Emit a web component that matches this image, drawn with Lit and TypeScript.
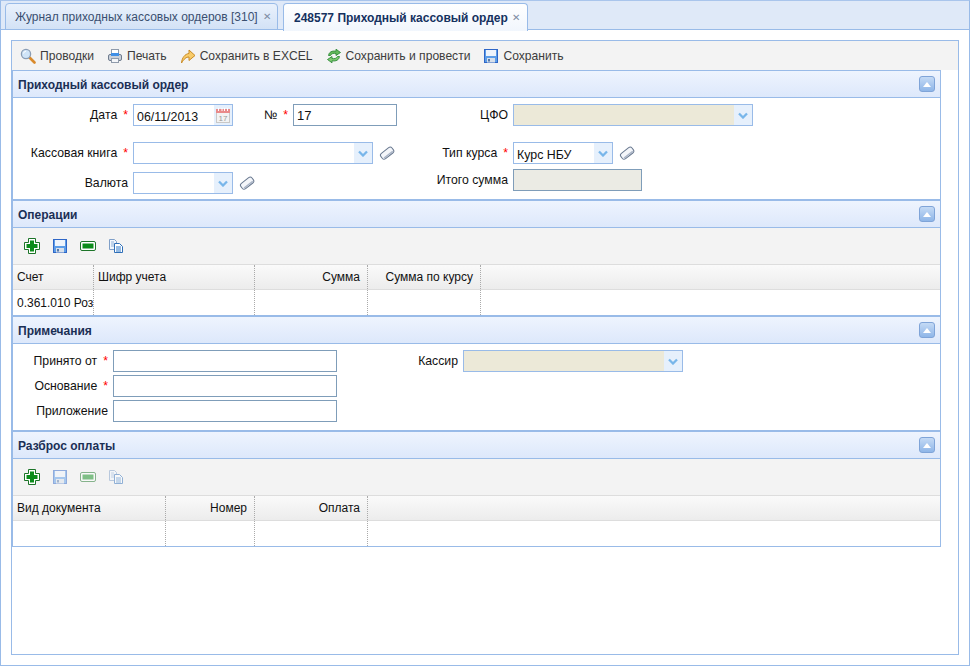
import { LitElement, html, css, svg } from "lit";
import { customElement } from "lit/decorators.js";

const plus = svg`<path d="M4.500.5h7v4h4v7h-4v4h-7v-4h-4v-7h4z" fill="#fff" stroke="#1c7428"/><path d="M6 2.500h4v3.500h3.500v4H10v3.500H6V10H2.500V6H6z" fill="#0b8c1a"/>`;
const floppy = svg`<rect x="1.500" y="1.500" width="13" height="13" fill="#5c9de8" stroke="#2f66c6"/><rect x="3" y="2" width="10" height="6" fill="#eef4fc"/><rect x="4" y="10" width="8" height="4.500" fill="#d8e0ea"/><rect x="5" y="11" width="2" height="2.500" fill="#5578a8"/>`;
const minus = svg`<rect x="0.500" y="3.500" width="15" height="9" rx="1.500" fill="#fff" stroke="#1c7428"/><rect x="2.500" y="5.500" width="11" height="5" fill="#0b8c1a"/>`;
const copy = svg`<path d="M1.500 1.500h5l2 2v8h-7z" fill="#f2f7fd" stroke="#7f9fc8"/><path d="M6.500 5.500h5l3 3v6h-8z" fill="#fff" stroke="#2f6fb8"/><path d="M8 9h5M8 11h5M8 13h5" stroke="#2f78c8"/><path d="M3 4h3M3 6h3M3 8h3" stroke="#8fb0d8"/>`;
const magnifier = svg`<path d="M9.500 9.500l5 5" stroke="#d98a2b" stroke-width="2.600" stroke-linecap="round"/><circle cx="6" cy="6" r="4.600" fill="#cfe4f8" stroke="#8a9db5" stroke-width="1.300"/><path d="M3.500 5.500a3 3 0 0 1 2.500-2.400" stroke="#fff" fill="none"/>`;
const printer = svg`<rect x="4.500" y="1.500" width="7" height="6" fill="#fff" stroke="#8f9bab"/><rect x="1.500" y="6.500" width="13" height="6" rx="1.500" fill="#c9d0da" stroke="#6f7c8e"/><rect x="4" y="5" width="8" height="3" fill="#3f8fe6"/><rect x="4.500" y="10.500" width="7" height="4" fill="#f4f6f9" stroke="#8f9bab"/>`;
const arrow = svg`<path d="M1.500 15C2 9.500 5 6 9 5.500V2l6 5.500-6 5V9C6 9 4 11 1.500 15z" fill="#f8cc6a" stroke="#c98a24" stroke-linejoin="round"/>`;
const recycle = svg`<path d="M2.500 7.500C3 4 6 2.500 10 3.200V1.200l4.500 3.300-4.500 3V5.500C7.500 5 5.500 5.500 4.500 7.500z" fill="#63b85a" stroke="#2f8a38" stroke-width=".9" stroke-linejoin="round"/><path d="M13.500 8.500C13 12 10 13.500 6 12.800v2L1.500 11.500l4.500-3v2c2.500.5 4.500 0 5.500-2z" fill="#7cc96f" stroke="#2f8a38" stroke-width=".9" stroke-linejoin="round"/>`;
const eraser = svg`<g transform="rotate(-38 8 8)"><rect x="1" y="4.800" width="14" height="6.800" rx="2.400" fill="#f4f6fa" stroke="#68788f"/><path d="M2.500 10.200h11" stroke="#a9b4c6" stroke-width="1.300"/></g>`;
const chevron = svg`<path d="M3 1.500l4 4 4-4" fill="none" stroke="#78b6ea" stroke-width="2.300"/>`;
const calendar = svg`<rect x="1.500" y="2.500" width="13" height="13" fill="#f3f3f3" stroke="#c8c8c8"/><rect x="1" y="2" width="14" height="4" fill="#e98a8a"/><path d="M3.500 1v3M7 1v3M9.500 1v3M12.500 1v3" stroke="#fff"/><text x="8" y="13.500" font-size="8" text-anchor="middle" fill="#9a9a9a" font-family="Liberation Sans">17</text>`;

const icon = (p: unknown, dim = false) =>
  html`<svg class="icon ${dim ? "dim" : ""}" viewBox="0 0 16 16" width="16" height="16">${p}</svg>`;

@customElement("app-root")
export class AppRoot extends LitElement {
  static styles = css`
    :host { display: block; width: 970px; height: 666px; font: 12px "Liberation Sans", Arial, sans-serif; color: #111; background: #fff; }
    * { box-sizing: border-box; }
    .frame { width: 970px; height: 666px; display: flex; flex-direction: column; border: 1px solid #99bbe8; border-top-color: #a9c5ec; }
    .strip { height: 29px; flex: none; display: flex; gap: 5px; padding: 2px 0 0 4px; background: #dfe9f8; border-bottom: 1px solid #99bbe8; }
    .tab { height: 27px; display: flex; align-items: center; border: 1px solid #99bbe8; border-radius: 4px 4px 0 0; padding: 0 5px 0 9px; color: #3a4f70; background: linear-gradient(#e9f1fc, #d3e2f6); }
    .tab.first { width: 273px; }
    .tab.active { width: 245px; padding-left: 10px; height: 28px; font-weight: bold; color: #15315f; background: linear-gradient(#fff, #f1f6fd); border-bottom: 0; }
    .x { margin-left: 5px; color: #7d8ca3; font-size: 10px; font-weight: normal; }
    .active .x { margin-left: 4px; }
    .content { flex: 1; padding: 10px; display: flex; }
    .panel { flex: 1; border: 1px solid #99bbe8; display: flex; flex-direction: column; }
    .main-tb { height: 29px; flex: none; display: flex; align-items: center; gap: 13px; padding: 1px 0 0 8px; background: #f3f3f3; color: #3c3c3c; width: 100%; font-size: 12.1px; }
    .tool { display: flex; align-items: center; gap: 4px; white-space: nowrap; }
    .icon { display: block; flex: none; }
    .dim { opacity: .5; }
    .sections { width: 929px; }
    .section { border: 1px solid #99bbe8; }
    .head { height: 27px; border-bottom: 1px solid #99bbe8; display: flex; align-items: center; justify-content: space-between; padding: 0 5px; background: linear-gradient(#eef4fe, #dde8fb); font-weight: bold; color: #1b2f55; }
    .head span { padding-top: 2px; }
    .collapse { width: 16px; height: 16px; border: 1px solid #7fa4d8; border-radius: 3px; background: linear-gradient(#c4daf5, #8fb6e8); display: flex; align-items: center; justify-content: center; }
    .collapse::before { content: ""; border: 4px solid transparent; border-top: 0; border-bottom: 5px solid #fff; }
    .form { display: flex; padding-top: 6px; }
    .s1 { height: 101px; }
    .s3 { height: 86px; }
    .col { display: flex; flex-direction: column; flex: none; }
    .left1 { width: 387px; }
    .left3 { width: 340px; gap: 3px; }
    .row { display: flex; align-items: center; height: 22px; gap: 5px; }
    .mt16 { margin-top: 16px; }
    .mt8 { margin-top: 8px; }
    .mt5 { margin-top: 5px; }
    .label { flex: none; text-align: right; white-space: nowrap; color: #111; padding-bottom: 1px; font-size: 12.25px; }
    .req::after { content: "*"; color: #f00; margin-left: 6px; }
    .input { flex: none; height: 22px; border: 1px solid #7f9db9; background: #fff; display: flex; align-items: center; justify-content: space-between; padding-left: 3px; font-size: 13px; line-height: 1; }
    .combo { border-color: #99bbe8; font-size: 12.4px; }
    .combo span { padding-top: 4px; }
    .trig { width: 18px; height: 20px; flex: none; background: #e6f0fc; display: flex; align-items: center; justify-content: center; }
    .beige { background: #ece9d8; }
    .gray { background: #ebebe4; }
    .erase { margin-left: 1px; }
    .tb2 { height: 36px; background: #f3f3f3; display: flex; align-items: center; gap: 12px; padding-left: 11px; }
    .grid { display: flex; flex-direction: column; }
    .ghead, .grow { display: flex; }
    .ghead { height: 26px; background: linear-gradient(#fafafa, #ececec); border-top: 1px solid #ddd; border-bottom: 1px solid #ddd; }
    .grow { height: 25px; background: #fff; }
    .cell { flex: none; display: flex; align-items: center; padding: 0 7px 0 4px; border-right: 1px dotted #aaa; overflow: hidden; white-space: nowrap; color: #111; }
    .right { justify-content: flex-end; }
    .fill { flex: 1; }
    .fill.cell { border-right: 0; }
  `;

  private label(text: string, width: number, req = false) {
    return html`<div class="label ${req ? "req" : ""}" style="width:${width}px">${text}</div>`;
  }

  private combo(width: number, value = "", cls = "") {
    return html`<div class="input combo ${cls}" style="width:${width}px"><span>${value}</span><div class="trig"><svg viewBox="0 0 14 7" width="14" height="7">${chevron}</svg></div></div>`;
  }

  private text(width: number, value = "", cls = "") {
    return html`<div class="input ${cls}" style="width:${width}px"><span>${value}</span></div>`;
  }

  private head(title: string) {
    return html`<div class="head"><span>${title}</span><div class="collapse"></div></div>`;
  }

  private tb(dim: boolean) {
    return html`<div class="tb2">${icon(plus)}${icon(floppy, dim)}${icon(minus, dim)}${icon(copy, dim)}</div>`;
  }

  private grid(cols: [string, number, boolean][], first = "") {
    return html`<div class="grid">
      <div class="ghead">
        ${cols.map(([t, w, r]) => html`<div class="cell ${r ? "right" : ""}" style="width:${w}px">${t}</div>`)}
        <div class="cell fill"></div>
      </div>
      <div class="grow">
        ${cols.map(([, w], i) => html`<div class="cell" style="width:${w}px">${i === 0 ? first : ""}</div>`)}
        <div class="cell fill"></div>
      </div>
    </div>`;
  }

  render() {
    return html`<div class="frame">
      <div class="strip">
        <div class="tab first">Журнал приходных кассовых ордеров [310]<span class="x">✕</span></div>
        <div class="tab active">248577 Приходный кассовый ордер<span class="x">✕</span></div>
      </div>
      <div class="content">
        <div class="panel">
          <div class="main-tb">
            <div class="tool">${icon(magnifier)}Проводки</div>
            <div class="tool">${icon(printer)}Печать</div>
            <div class="tool">${icon(arrow)}Сохранить в EXCEL</div>
            <div class="tool">${icon(recycle)}Сохранить и провести</div>
            <div class="tool">${icon(floppy)}Сохранить</div>
          </div>
          <div class="sections">
            <div class="section">
              ${this.head("Приходный кассовый ордер")}
              <div class="form s1">
                <div class="col left1">
                  <div class="row">
                    ${this.label("Дата", 115, true)}
                    <div class="input combo" style="width:100px"><span>06/11/2013</span><div class="trig"><svg viewBox="0 0 16 16" width="16" height="16">${calendar}</svg></div></div>
                    ${this.label("№", 50, true)}
                    ${this.text(104, "17")}
                  </div>
                  <div class="row mt16">
                    ${this.label("Кассовая книга", 115, true)}
                    ${this.combo(240)}
                    <div class="erase">${icon(eraser)}</div>
                  </div>
                  <div class="row mt8">
                    ${this.label("Валюта", 115)}
                    ${this.combo(100)}
                    <div class="erase">${icon(eraser)}</div>
                  </div>
                </div>
                <div class="col">
                  <div class="row">
                    ${this.label("ЦФО", 108)}
                    ${this.combo(240, "", "beige")}
                  </div>
                  <div class="row mt16">
                    ${this.label("Тип курса", 108, true)}
                    ${this.combo(100, "Курс НБУ")}
                    <div class="erase">${icon(eraser)}</div>
                  </div>
                  <div class="row mt5">
                    ${this.label("Итого сумма", 108)}
                    ${this.text(129, "", "gray")}
                  </div>
                </div>
              </div>
            </div>
            <div class="section">
              ${this.head("Операции")}
              ${this.tb(false)}
              ${this.grid([["Счет", 81, false], ["Шифр учета", 161, false], ["Сумма", 113, true], ["Сумма по курсу", 113, true]], "0.361.010 Розничная")}
            </div>
            <div class="section">
              ${this.head("Примечания")}
              <div class="form s3">
                <div class="col left3">
                  <div class="row">${this.label("Принято от", 95, true)}${this.text(224)}</div>
                  <div class="row">${this.label("Основание", 95, true)}${this.text(224)}</div>
                  <div class="row">${this.label("Приложение", 95)}${this.text(224)}</div>
                </div>
                <div class="col">
                  <div class="row">${this.label("Кассир", 105)}${this.combo(220, "", "beige")}</div>
                </div>
              </div>
            </div>
            <div class="section">
              ${this.head("Разброс оплаты")}
              ${this.tb(true)}
              ${this.grid([["Вид документа", 153, false], ["Номер", 89, true], ["Оплата", 113, true]])}
            </div>
          </div>
        </div>
      </div>
    </div>`;
  }
}
